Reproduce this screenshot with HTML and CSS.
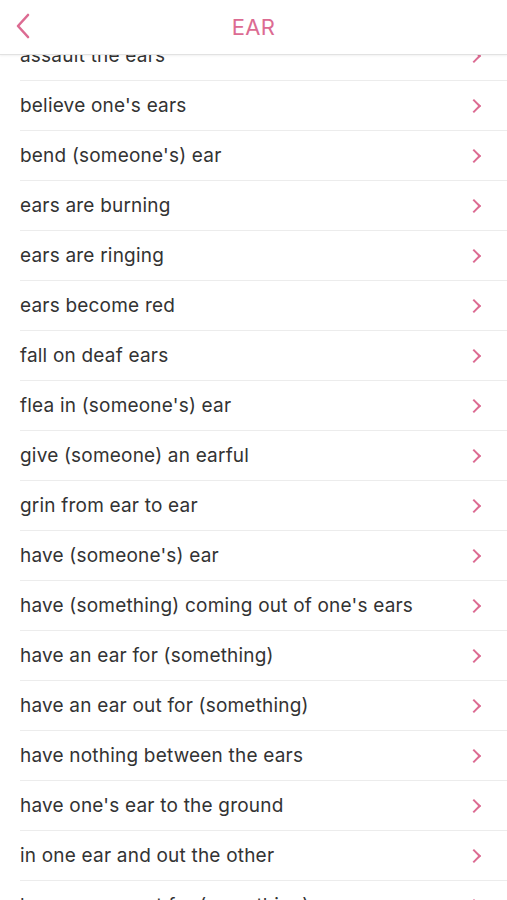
FILE: index.html
```html
<!DOCTYPE html>
<html>
<head>
<meta charset="utf-8">
<link rel="stylesheet" href="styles.css">
</head>
<body>
<header class="nav">
  <svg class="back" width="16" height="26" viewBox="0 0 16 26"><path d="M13 2 L3 13 L13 24" fill="none" stroke="#dc6b92" stroke-width="2.6" stroke-linecap="round" stroke-linejoin="round"/></svg>
  <div class="title">EAR</div>
</header>
<ul class="list">
  <li><span>assault the ears</span><i></i></li>
  <li><span>believe one's ears</span><i></i></li>
  <li><span>bend (someone's) ear</span><i></i></li>
  <li><span>ears are burning</span><i></i></li>
  <li><span>ears are ringing</span><i></i></li>
  <li><span>ears become red</span><i></i></li>
  <li><span>fall on deaf ears</span><i></i></li>
  <li><span>flea in (someone's) ear</span><i></i></li>
  <li><span>give (someone) an earful</span><i></i></li>
  <li><span>grin from ear to ear</span><i></i></li>
  <li><span>have (someone's) ear</span><i></i></li>
  <li><span>have (something) coming out of one's ears</span><i></i></li>
  <li><span>have an ear for (something)</span><i></i></li>
  <li><span>have an ear out for (something)</span><i></i></li>
  <li><span>have nothing between the ears</span><i></i></li>
  <li><span>have one's ear to the ground</span><i></i></li>
  <li><span>in one ear and out the other</span><i></i></li>
  <li><span>keep an ear out for (something)</span><i></i></li>
</ul>
</body>
</html>
```
FILE: styles.css
```css
html, body { margin: 0; padding: 0; background: #fff; }
body { font-family: Inter, "Liberation Sans", sans-serif; overflow: hidden; height: 900px; position: relative; }
.nav {
  position: absolute; top: 0; left: 0; right: 0; height: 54px;
  background: #fff; border-bottom: 1px solid #e2e2e2;
  box-shadow: 0 1px 2px rgba(0,0,0,0.06);
  display: flex; align-items: center; justify-content: center; z-index: 2;
}
.back { position: absolute; left: 15px; top: 13px; }
.title { color: #dc6b92; font-size: 22px; font-weight: 400; letter-spacing: 0.3px; margin-top: -1px; }
.list { list-style: none; margin: 0; padding: 31px 0 0 20px; }
.list li {
  height: 49px; border-bottom: 1px solid #ececec;
  display: flex; align-items: center; justify-content: space-between;
  padding-right: 28px;
}
.list span { color: #333; font-size: 19px; letter-spacing: 0.2px; }
.list i {
  width: 8px; height: 8px; border-right: 2.4px solid #dc6b92; border-top: 2.4px solid #dc6b92;
  transform: rotate(45deg); margin-top: 1px;
}
```
